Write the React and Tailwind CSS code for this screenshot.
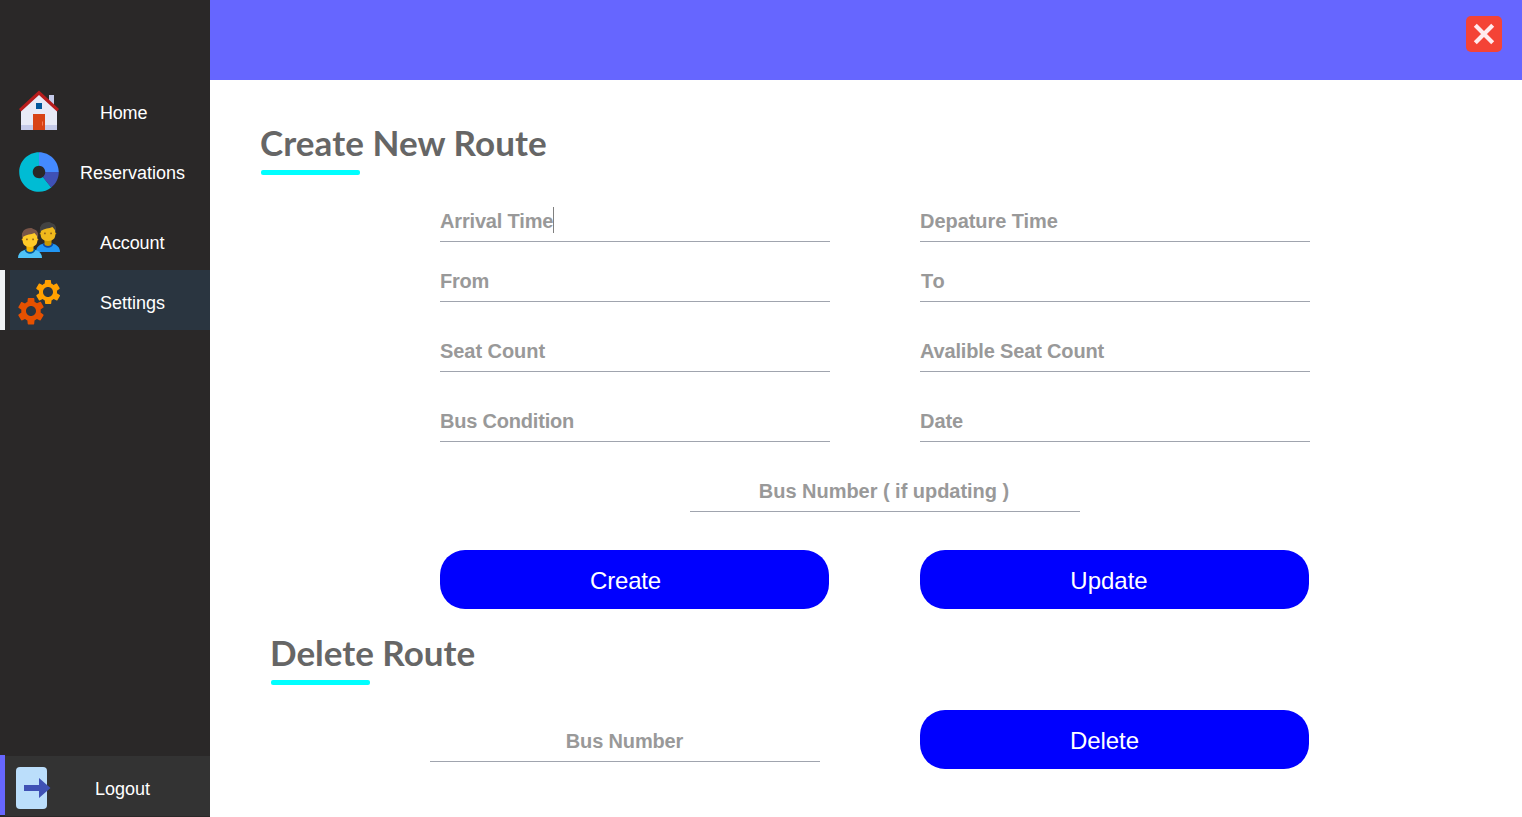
import React from "react";
import { FcDoughnutChart, FcServices } from "react-icons/fc";

function HouseIcon() {
  return (
    <svg width="48" height="48" viewBox="0 0 48 48">
      <path fill="#c5cae9" d="M34 8h5v12h-5z" />
      <path fill="#e8eaf6" d="M24 7 6 23v20h36V23z" />
      <path fill="#c5cae9" d="M6 38h36v5H6z" />
      <path fill="#b71c1c" d="M24 3.500 4 22l2 2.500L24 8l18 16.500L44 22z" />
      <path fill="#d84315" d="M18 27h12v16H18z" />
      <path fill="#01579b" d="M21 16h6v6h-6z" />
      <path fill="#ff8a65" d="M27 34.500h.8v4H27z" />
    </svg>
  );
}

function Person({ shirt, collar, neck, skin, ear, hair, eye }) {
  return (
    <>
      <path fill={shirt} d="M0 30c0-4.500 3-7.500 8-8.500h8c5 1 8 4 8 8.500z" />
      <path fill={collar} d="M6.500 21.800C8 27 16 27 17.500 21.800l-2-1H8.500z" />
      <path fill={neck} d="M8.500 16h7v6c0 2.600-7 2.600-7 0z" />
      <circle cx="4.800" cy="11.500" r="1.100" fill={ear} />
      <circle cx="19.200" cy="11.500" r="1.100" fill={ear} />
      <path fill={skin} d="M4.700 6c0-5 14.600-5 14.600 0v7c0 2.800-1.900 6-7.300 6s-7.300-3.200-7.300-6z" />
      <path fill={hair} d="M4 10C3.200 3.500 6.500 0 12.500 0c1.300 0 2.200.4 2.800 1.100C19 1.800 20.800 5 20 10l-.6.700V8.500L16.500 5C13 6.500 8.500 6.300 4.700 9v1.600z" />
      <rect x="8" y="10.600" width="1.800" height="1.600" fill={eye} fillOpacity=".75" />
      <rect x="14.200" y="10.600" width="1.800" height="1.600" fill={eye} fillOpacity=".75" />
    </>
  );
}

function PeopleIcon() {
  return (
    <svg width="48" height="48" viewBox="0 0 48 48">
      <g transform="translate(21 6)">
        <Person shirt="#2196f3" collar="#0d47a1" neck="#c99700" skin="#f0b91c" ear="#c99700" hair="#424242" eye="#784719" />
      </g>
      <g transform="translate(3 12)">
        <Person shirt="#4fc3f7" collar="#01579b" neck="#f5b400" skin="#ffca28" ear="#ffb300" hair="#795548" eye="#784719" />
      </g>
    </svg>
  );
}

function LogoutIcon() {
  return (
    <svg width="36" height="42" viewBox="0 0 36 42">
      <rect width="31" height="42" rx="4" fill="#bbdefb" />
      <path fill="#3f51b5" d="M8 18h15v-7l11.500 10L23 31v-7H8z" />
    </svg>
  );
}

function NavItem({ icon, label, className = "", labelClass }) {
  return (
    <div className={`flex h-[60px] items-center ${className}`}>
      <div className="w-[48px] shrink-0">{icon}</div>
      <span className={`text-[18px] leading-[26px] text-white ${labelClass}`}>{label}</span>
    </div>
  );
}

function Field({ label, centered, caret, className = "", labelClass = "tracking-[-0.05px]" }) {
  return (
    <div
      className={`flex h-[42px] w-[390px] items-center border-b border-[#a0a4ae] text-[20px] leading-[26px] font-bold whitespace-pre text-[#999999] ${centered ? "justify-center" : ""} ${className}`}
    >
      <span className={labelClass}>{label}</span>
      {caret && <span className="mb-[2px] h-[26px] w-px bg-[#808080]" />}
    </div>
  );
}

function Button({ label, labelClass = "" }) {
  return (
    <button className="h-[59px] w-[389px] rounded-[25px] bg-[#0000ff] pt-[3px] pr-[19px] text-[24px] leading-[30px] text-white">
      <span className={labelClass}>{label}</span>
    </button>
  );
}

function Heading({ label, className = "" }) {
  return (
    <div className={className}>
      <h1 className="h-[44px] font-[Lato,sans-serif] text-[35px] leading-[44px] font-bold whitespace-nowrap text-[#666666]">
        {label}
      </h1>
      <div className="mt-[6px] ml-px h-[5px] w-[99px] rounded-[2px] bg-[#00ffff]" />
    </div>
  );
}

export default function App() {
  return (
    <div className="flex h-[817px] w-[1522px] overflow-hidden bg-white font-['Liberation_Sans',Arial,sans-serif]">
      <aside className="flex w-[210px] shrink-0 flex-col bg-[#2a2828] pt-[80px]">
        <NavItem icon={<HouseIcon />} label="Home" className="pt-[2px] pl-[15px]" labelClass="pt-[3px] ml-[37px] tracking-[-0.2px]" />
        <NavItem icon={<FcDoughnutChart size={50} className="-ml-px" />} label="Reservations" className="pt-[4px] pl-[15px]" labelClass="pt-[1px] ml-[17px]" />
        <NavItem icon={<PeopleIcon />} label="Account" className="mt-[10px] pl-[15px]" labelClass="pt-[5px] ml-[37px] tracking-[-0.1px]" />
        <div className="flex">
          <div className="w-[5px] bg-[#f0f0f0]" />
          <NavItem icon={<FcServices size={48} />} label="Settings" className="ml-[5px] w-[200px] bg-[#2a3540] pt-[4px] pl-[5px]" labelClass="pt-[1px] ml-[37px]" />
        </div>
        <div className="mt-auto flex items-start">
          <div className="h-[60px] w-[5px] bg-[#6666ff]" />
          <NavItem icon={<LogoutIcon />} label="Logout" className="mt-px mb-px w-[205px] bg-[#333333] pt-[4px] pl-[11px]" labelClass="pt-[1px] ml-[31px]" />
        </div>
      </aside>
      <div className="flex flex-1 flex-col">
        <header className="flex h-[80px] justify-end bg-[#6666ff] pt-[16px] pr-[20px]">
          <button className="h-[36px] w-[36px]" aria-label="Close">
            <svg width="36" height="36" viewBox="0 0 36 36">
              <rect width="36" height="36" rx="5" fill="#f44336" />
              <path d="M9.300 9.300l17.400 17.400M26.700 9.300l-17.400 17.400" stroke="#ffebee" strokeWidth="4.200" />
            </svg>
          </button>
        </header>
        <main className="flex flex-1 flex-col">
          <Heading label="Create New Route" className="mt-[40px] ml-[50px] tracking-[0.08px]" />
          <div className="mt-[25px] ml-[230px] grid w-[870px] grid-cols-[390px_390px] justify-between">
            <Field label="Arrival Time" caret labelClass="tracking-[-0.17px]" />
            <Field label="Depature Time" />
            <Field label="From" className="mt-[18px]" labelClass="tracking-[-0.2px]" />
            <Field label="To" className="mt-[18px]" labelClass="ml-px tracking-[0.8px]" />
            <Field label="Seat Count" className="mt-[28px]" />
            <Field label="Avalible Seat Count" className="mt-[28px]" labelClass="tracking-[-0.16px]" />
            <Field label="Bus Condition" className="mt-[28px]" labelClass="tracking-[-0.2px]" />
            <Field label="Date" className="mt-[28px]" />
          </div>
          <Field label="Bus Number ( if updating )" centered className="mt-[28px] ml-[480px]" labelClass="mr-[2px] tracking-[-0.03px]" />
          <div className="mt-[38px] ml-[230px] flex gap-[91px]">
            <Button label="Create" labelClass="ml-px tracking-[-0.2px]" />
            <Button label="Update" labelClass="ml-[8px]" />
          </div>
          <Heading label="Delete Route" className="mt-[21px] ml-[60px]" />
          <div className="mt-[25px] ml-[220px] flex gap-[100px]">
            <Field label="Bus Number" centered className="mt-[10px]" labelClass="mr-px tracking-[-0.15px]" />
            <Button label="Delete" labelClass="mr-px tracking-[-0.1px]" />
          </div>
        </main>
      </div>
    </div>
  );
}
